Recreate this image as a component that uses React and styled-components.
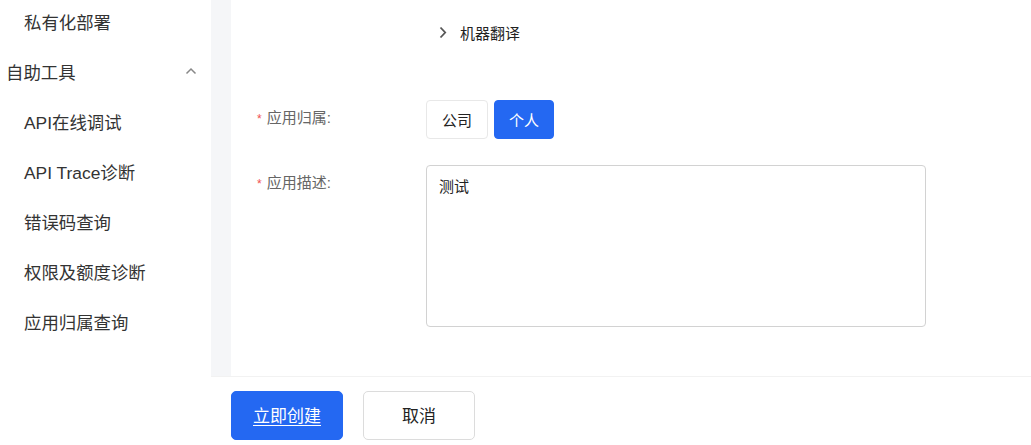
import React from "react";
import styled, { createGlobalStyle } from "styled-components";

const Global = createGlobalStyle`
  html, body { margin: 0; padding: 0; background: #fff; }
  body { font-family: "Liberation Sans", "Noto Sans CJK SC", sans-serif; color: #333; }
  * { box-sizing: border-box; }
`;

const Page = styled.div`
  display: flex;
  width: 1031px;
  height: 445px;
  overflow: hidden;
`;

const Sidebar = styled.nav`
  width: 211px;
  flex: none;
  background: #fff;
  display: flex;
  flex-direction: column;
  margin-top: -4px;
  position: relative;
  z-index: 1;
`;

const NavItem = styled.div`
  height: 50px;
  display: flex;
  align-items: center;
  justify-content: space-between;
  padding-left: ${(p) => (p.$group ? "6px" : "24px")};
  padding-right: 14px;
  font-size: 17.4px;
  color: #333;
  white-space: nowrap;
`;

const Right = styled.div`
  flex: 1;
  display: flex;
  flex-direction: column;
  background: #f5f6f8;
`;

const Content = styled.div`
  flex: 1;
  padding-left: 20px;
  display: flex;
`;

const Panel = styled.div`
  flex: 1;
  background: #fff;
  padding: 18px 0 0 26px;
  display: flex;
  flex-direction: column;
`;

const TreeRow = styled.div`
  display: flex;
  align-items: center;
  height: 28px;
  margin-left: 169px;
  padding-left: 13px;
  gap: 13px;
  font-size: 15px;
  color: #222;
`;

const FormRow = styled.div`
  display: flex;
  margin-top: ${(p) => p.$top}px;
`;

const Label = styled.div`
  width: 169px;
  flex: none;
  line-height: 36px;
  font-size: 15px;
  color: #666;
  white-space: nowrap;
`;

const Star = styled.span`
  color: #f05050;
  font-size: 12px;
  margin-right: 5px;
`;

const Segment = styled.div`
  display: flex;
  gap: 6px;
`;

const SegButton = styled.button`
  height: 39px;
  width: ${(p) => p.$w}px;
  border-radius: 4px;
  border: 1px solid ${(p) => (p.$active ? "#2468f2" : "#e8e8e8")};
  background: ${(p) => (p.$active ? "#2468f2" : "#fff")};
  color: ${(p) => (p.$active ? "#fff" : "#222")};
  font-family: inherit;
  font-size: 15px;
  padding: 0;
`;

const TextArea = styled.div`
  width: 500px;
  height: 162px;
  border: 1px solid #d2d2d2;
  border-radius: 4px;
  padding: 11px 12px;
  font-size: 15px;
  line-height: 20px;
  color: #222;
`;

const Footer = styled.div`
  height: 69px;
  flex: none;
  background: #fff;
  border-top: 1px solid #f2f2f2;
  display: flex;
  align-items: flex-start;
  padding: 14px 0 0 20px;
  gap: 20px;
`;

const FootButton = styled.button`
  width: 112px;
  height: 49px;
  border-radius: 5px;
  font-family: inherit;
  font-size: 17px;
  padding: 0 0 3px;
  border: 1px solid ${(p) => (p.$primary ? "#2468f2" : "#dcdcdc")};
  background: ${(p) => (p.$primary ? "#2468f2" : "#fff")};
  color: ${(p) => (p.$primary ? "#fff" : "#222")};
  text-decoration: ${(p) => (p.$primary ? "underline" : "none")};
  text-underline-offset: 3px;
`;

const ChevronUp = () => (
  <svg width="12" height="8" viewBox="0 0 12 8" fill="none">
    <path d="M1.5 6.5L6 2L10.5 6.5" stroke="#888" strokeWidth="1.5" />
  </svg>
);

const ChevronRight = () => (
  <svg width="8" height="13" viewBox="0 0 8 13" fill="none">
    <path d="M1.5 1.5L6.2 6.5L1.5 11.5" stroke="#555" strokeWidth="1.8" />
  </svg>
);

const navItems = ["API在线调试", "API Trace诊断", "错误码查询", "权限及额度诊断", "应用归属查询"];

export default function App() {
  return (
    <>
      <Global />
      <Page>
        <Sidebar>
          <NavItem>私有化部署</NavItem>
          <NavItem $group>
            自助工具
            <ChevronUp />
          </NavItem>
          {navItems.map((t) => (
            <NavItem key={t}>{t}</NavItem>
          ))}
        </Sidebar>
        <Right>
          <Content>
            <Panel>
              <TreeRow>
                <ChevronRight />
                <span>机器翻译</span>
              </TreeRow>
              <FormRow $top={54}>
                <Label>
                  <Star>*</Star>应用归属:
                </Label>
                <Segment>
                  <SegButton $w={62}>公司</SegButton>
                  <SegButton $w={60} $active>
                    个人
                  </SegButton>
                </Segment>
              </FormRow>
              <FormRow $top={26}>
                <Label>
                  <Star>*</Star>应用描述:
                </Label>
                <TextArea>测试</TextArea>
              </FormRow>
            </Panel>
          </Content>
          <Footer>
            <FootButton $primary>立即创建</FootButton>
            <FootButton>取消</FootButton>
          </Footer>
        </Right>
      </Page>
    </>
  );
}
